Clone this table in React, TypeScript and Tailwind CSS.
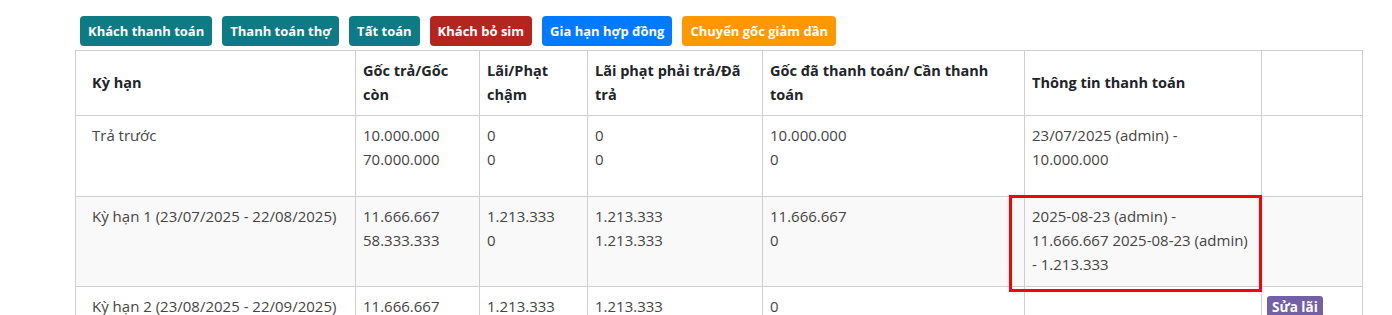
const buttons = [
  { label: "Khách thanh toán", cls: "bg-[#0c7b83]" },
  { label: "Thanh toán thợ", cls: "bg-[#0c7b83]" },
  { label: "Tất toán", cls: "bg-[#0c7b83]" },
  { label: "Khách bỏ sim", cls: "bg-[#b3261f]" },
  { label: "Gia hạn hợp đồng", cls: "bg-[#007bff]" },
  { label: "Chuyển gốc giảm dần", cls: "bg-[#ff9800]" },
];

type Row = {
  term: string;
  goc: string[];
  lai: string[];
  phat: string[];
  paid: string[];
  info: string[];
  action?: boolean;
  height: string;
  striped?: boolean;
};

const rows: Row[] = [
  {
    term: "Trả trước",
    goc: ["10.000.000", "70.000.000"],
    lai: ["0", "0"],
    phat: ["0", "0"],
    paid: ["10.000.000", "0"],
    info: ["23/07/2025 (admin) -", "10.000.000"],
    height: "h-[81px]",
  },
  {
    term: "Kỳ hạn 1 (23/07/2025 - 22/08/2025)",
    goc: ["11.666.667", "58.333.333"],
    lai: ["1.213.333", "0"],
    phat: ["1.213.333", "1.213.333"],
    paid: ["11.666.667", "0"],
    info: ["2025-08-23 (admin) -", "11.666.667 2025-08-23 (admin)", "- 1.213.333"],
    height: "h-[90px]",
    striped: true,
  },
  {
    term: "Kỳ hạn 2 (23/08/2025 - 22/09/2025)",
    goc: ["11.666.667", "46.666.666"],
    lai: ["1.213.333", "0"],
    phat: ["1.213.333", "0"],
    paid: ["0", "11.666.667"],
    info: [],
    action: true,
    height: "h-[90px]",
  },
];

function Lines({ items }: { items: string[] }) {
  return (
    <>
      {items.map((line, i) => (
        <div key={i} className="whitespace-nowrap">
          {line}
        </div>
      ))}
    </>
  );
}

export default function App() {
  const th = "border border-[#cfcfcf] px-[7px] text-left align-middle text-[14.5px] font-bold text-[#212529]";
  const td = "border border-[#cfcfcf] px-[7px] pt-[7px] align-top";

  return (
    <div className="h-[315px] overflow-hidden bg-white pl-[75px] pt-4 font-['Open_Sans',sans-serif] text-[15px] leading-6 text-[#454545]">
      <div className="flex gap-[10px] pl-[5px]">
        {buttons.map((b) => (
          <button
            key={b.label}
            type="button"
            className={`h-[30px] rounded px-[8px] text-[13px] font-bold text-white ${b.cls}`}
          >
            {b.label}
          </button>
        ))}
      </div>

      <div className="relative mt-1 w-[1288px]">
        <table className="w-[1288px] table-fixed border-collapse">
          <colgroup>
            <col className="w-[280px]" />
            <col className="w-[124px]" />
            <col className="w-[108px]" />
            <col className="w-[175px]" />
            <col className="w-[262px]" />
            <col className="w-[237px]" />
            <col className="w-[101px]" />
          </colgroup>
          <thead>
            <tr className="h-[65px]">
              <th className={`${th} pl-4`}>Kỳ hạn</th>
              <th className={th}>
                Gốc trả/Gốc
                <br />
                còn
              </th>
              <th className={th}>
                Lãi/Phạt
                <br />
                chậm
              </th>
              <th className={th}>
                Lãi phạt phải trả/Đã
                <br />
                trả
              </th>
              <th className={th}>
                Gốc đã thanh toán/ Cần thanh
                <br />
                toán
              </th>
              <th className={th}>Thông tin thanh toán</th>
              <th className={th}></th>
            </tr>
          </thead>
          <tbody>
            {rows.map((r) => (
              <tr key={r.term} className={`${r.height} ${r.striped ? "bg-[#f9f9f9]" : "bg-white"}`}>
                <td className={`${td} pl-4`}>{r.term}</td>
                <td className={td}>
                  <Lines items={r.goc} />
                </td>
                <td className={td}>
                  <Lines items={r.lai} />
                </td>
                <td className={td}>
                  <Lines items={r.phat} />
                </td>
                <td className={td}>
                  <Lines items={r.paid} />
                </td>
                <td className={td}>
                  <Lines items={r.info} />
                </td>
                <td className={`${td} pl-[5px]`}>
                  {r.action && (
                    <span className="inline-block rounded-[3px] bg-[#7460a4] px-[5px] text-[13.5px] font-bold leading-[22px] text-white">
                      Sửa lãi
                    </span>
                  )}
                </td>
              </tr>
            ))}
          </tbody>
        </table>

        {/* highlight box drawn over the payment info cell */}
        <div className="pointer-events-none absolute left-[934px] top-[145px] h-[97px] w-[253px] border-[3px] border-[#f00]" />
      </div>
    </div>
  );
}
